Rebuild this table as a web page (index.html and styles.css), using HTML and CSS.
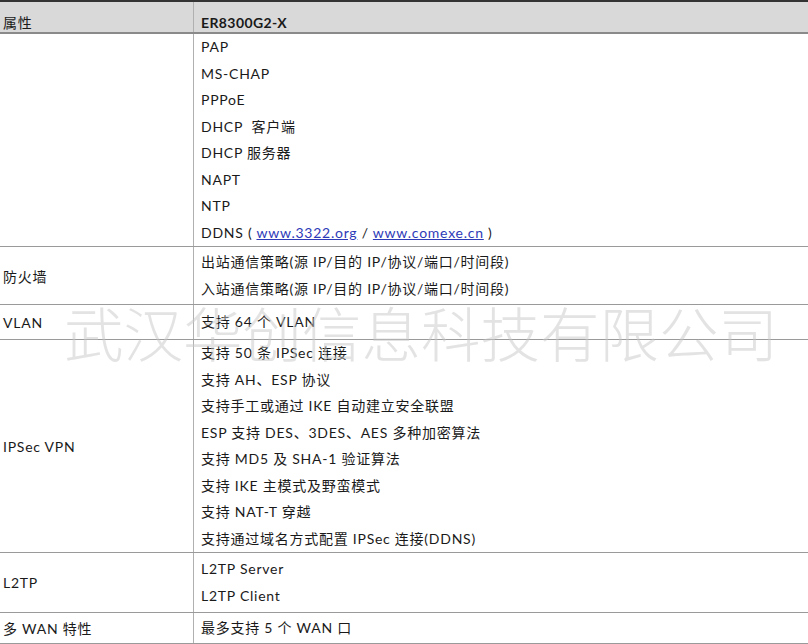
FILE: index.html
```html
<!DOCTYPE html>
<html lang="zh">
<head>
<meta charset="utf-8">
<link rel="stylesheet" href="styles.css">
</head>
<body>
<div class="page">
<table class="spec">
  <thead>
    <tr class="head">
      <th class="c1">属性</th>
      <th class="c2 model">ER8300G2-X</th>
    </tr>
  </thead>
  <tbody>
    <tr class="r-proto">
      <td class="c1"></td>
      <td class="c2">
        <div>PAP</div>
        <div>MS-CHAP</div>
        <div>PPPoE</div>
        <div>DHCP &nbsp;客户端</div>
        <div>DHCP 服务器</div>
        <div>NAPT</div>
        <div>NTP</div>
        <div>DDNS ( <a href="#">www.3322.org</a> / <a href="#">www.comexe.cn</a> )</div>
      </td>
    </tr>
    <tr class="r-fw">
      <td class="c1">防火墙</td>
      <td class="c2">
        <div>出站通信策略(源 IP/目的 IP/协议/端口/时间段)</div>
        <div>入站通信策略(源 IP/目的 IP/协议/端口/时间段)</div>
      </td>
    </tr>
    <tr class="r-vlan">
      <td class="c1">VLAN</td>
      <td class="c2"><div>支持 64 个 VLAN</div></td>
    </tr>
    <tr class="r-ipsec">
      <td class="c1">IPSec VPN</td>
      <td class="c2">
        <div>支持 50 条 IPSec 连接</div>
        <div>支持 AH、ESP 协议</div>
        <div>支持手工或通过 IKE 自动建立安全联盟</div>
        <div>ESP 支持 DES、3DES、AES 多种加密算法</div>
        <div>支持 MD5 及 SHA-1 验证算法</div>
        <div>支持 IKE 主模式及野蛮模式</div>
        <div>支持 NAT-T 穿越</div>
        <div>支持通过域名方式配置 IPSec 连接(DDNS)</div>
      </td>
    </tr>
    <tr class="r-l2tp">
      <td class="c1">L2TP</td>
      <td class="c2">
        <div>L2TP Server</div>
        <div>L2TP Client</div>
      </td>
    </tr>
    <tr class="r-wan">
      <td class="c1">多 WAN 特性</td>
      <td class="c2"><div>最多支持 5 个 WAN 口</div></td>
    </tr>
    <tr class="r-next">
      <td class="c1"></td>
      <td class="c2"></td>
    </tr>
  </tbody>
</table>
<div class="watermark">武汉华创信息科技有限公司</div>
</div>
</body>
</html>
```

FILE: styles.css
```css
html, body {
  margin: 0;
  padding: 0;
  background: #ffffff;
}

.page {
  position: relative;
  width: 808px;
  height: 644px;
  overflow: hidden;
}

.spec {
  width: 808px;
  border-collapse: collapse;
  font-family: "Lato", "Noto Sans CJK SC", sans-serif;
  font-size: 14px;
  letter-spacing: 0.75px;
  color: #1a1a1a;
}

.spec th,
.spec td {
  padding: 0;
  text-align: left;
  font-weight: normal;
  border-bottom: 1px solid #9a9a9a;
}

.spec .c1 {
  width: 190px;
  padding-left: 3px;
  border-right: 1px solid #b0b0b0;
  vertical-align: middle;
}

.spec .c2 {
  padding-left: 7px;
  vertical-align: middle;
}

.spec .c2 div {
  line-height: 26.5px;
  white-space: nowrap;
}

.head {
  height: 29px;
  background: #d9d9d9;
  border-top: 2px solid #333333;
}

.head th {
  vertical-align: top;
  padding-top: 12px;
  line-height: 18px;
  border-bottom: 2px solid #8a8a8a;
}

.head .model {
  font-weight: bold;
  letter-spacing: 0.4px;
}

.r-proto { height: 213px; }
.r-fw { height: 58px; }
.r-vlan { height: 35px; }
.r-ipsec { height: 211px; }
.r-l2tp { height: 60px; }
.r-wan { height: 31px; }
.r-next { height: 30px; }

.spec a {
  color: #2e3bb8;
  text-decoration: underline;
}

.watermark {
  position: absolute;
  left: 64px;
  top: 296px;
  font-family: "Noto Sans CJK SC", sans-serif;
  font-weight: 300;
  font-size: 59.5px;
  line-height: 70px;
  color: rgba(200, 200, 200, 0.5);
  white-space: nowrap;
  pointer-events: none;
}
```
